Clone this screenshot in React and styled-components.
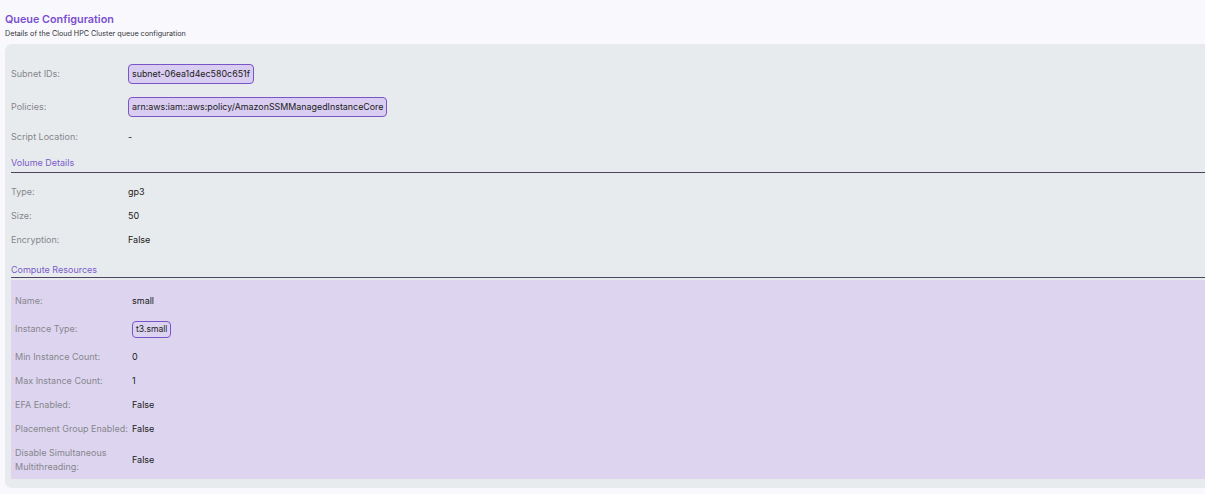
import React from 'react'
import styled, { createGlobalStyle } from 'styled-components'

const GlobalStyle = createGlobalStyle`
  html, body {
    margin: 0;
    padding: 0;
    background: #f9f9fd;
    overflow: hidden;
  }
  body {
    font-family: Inter, "Noto Sans", sans-serif;
    color: #1f1f24;
  }
`

const Page = styled.div`
  padding: 12px 0 0 5px;
  width: 1230px;
`

const Title = styled.h2`
  margin: 0;
  font-size: 10.8px;
  line-height: 15px;
  font-weight: 600;
  color: #7b4fd0;
`

const Subtitle = styled.p`
  margin: 2px 0 0;
  font-size: 7.2px;
  line-height: 10px;
  color: #333338;
`

const Panel = styled.div`
  margin-top: 5px;
  background: #e8ebee;
  border-radius: 7px;
  padding: 13px 0 9px 6px;
`

const Row = styled.div`
  display: grid;
  grid-template-columns: 117px 1fr;
  align-items: center;
  min-height: ${(p) => p.$height || 24}px;
  font-size: 9px;
  line-height: 14px;
`

const Label = styled.span`
  color: #86868c;
  padding: 5px 0;
`

const Value = styled.span`
  color: #1c1c20;
`

const Chip = styled.span`
  display: inline-flex;
  align-items: center;
  height: ${(p) => p.$size || 20}px;
  padding: 0 3px;
  border: 1px solid #7a55c8;
  border-radius: 4px;
  background: ${(p) => p.$bg || '#d9cdf1'};
  color: #1c1c20;
  font-size: ${(p) => p.$font || 8.9}px;
  box-sizing: border-box;
`

const Section = styled.div`
  margin-top: ${(p) => p.$top}px;
  padding-bottom: ${(p) => p.$bottom || 3}px;
  border-bottom: 1px solid #4d4560;
  color: #7a5ccb;
  font-size: 9px;
  line-height: 12px;
`

const SectionBody = styled.div`
  padding-top: 7px;
`

const ComputeBox = styled.div`
  margin-top: 2px;
  background: #ddd5f0;
  padding: 9px 0 0 4px;
`

function Field({ label, children, height }) {
  return (
    <Row $height={height}>
      <Label>{label}</Label>
      <div>{children}</div>
    </Row>
  )
}

export default function App() {
  return (
    <>
      <GlobalStyle />
      <Page>
        <Title>Queue Configuration</Title>
        <Subtitle>Details of the Cloud HPC Cluster queue configuration</Subtitle>
        <Panel>
          <Field label="Subnet IDs:" height={33}>
            <Chip>subnet-06ea1d4ec580c651f</Chip>
          </Field>
          <Field label="Policies:" height={33}>
            <Chip>arn:aws:iam::aws:policy/AmazonSSMManagedInstanceCore</Chip>
          </Field>
          <Field label="Script Location:" height={28}>
            <Value>-</Value>
          </Field>

          <Section $top={6}>Volume Details</Section>
          <SectionBody>
            <Field label="Type:"><Value>gp3</Value></Field>
            <Field label="Size:"><Value>50</Value></Field>
            <Field label="Encryption:"><Value>False</Value></Field>
          </SectionBody>

          <Section $top={12} $bottom={1}>Compute Resources</Section>
          <ComputeBox>
            <Field label="Name:"><Value>small</Value></Field>
            <Field label="Instance Type:" height={32}>
              <Chip $size={17} $font={8.6} $bg="#dcd3f1">t3.small</Chip>
            </Field>
            <Field label="Min Instance Count:"><Value>0</Value></Field>
            <Field label="Max Instance Count:"><Value>1</Value></Field>
            <Field label="EFA Enabled:"><Value>False</Value></Field>
            <Field label="Placement Group Enabled:"><Value>False</Value></Field>
            <Field label="Disable Simultaneous Multithreading:"><Value>False</Value></Field>
          </ComputeBox>
        </Panel>
      </Page>
    </>
  )
}
